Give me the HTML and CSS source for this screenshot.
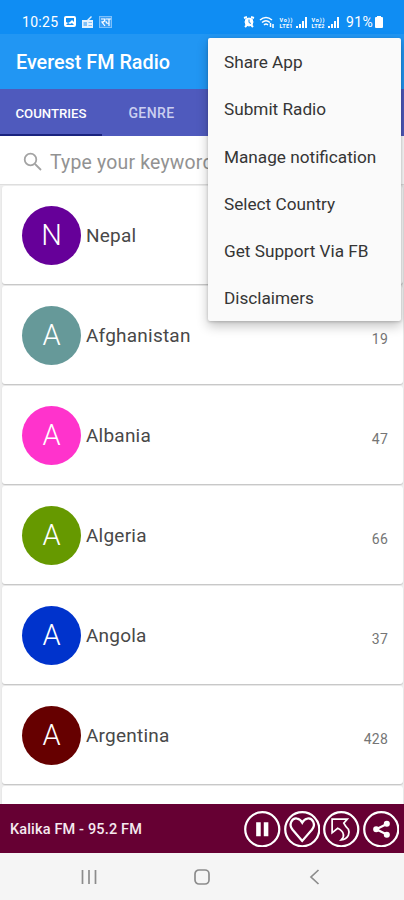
FILE: index.html
```html
<!DOCTYPE html>
<html lang="en">
<head>
<meta charset="utf-8">
<title>Everest FM Radio</title>
<link rel="stylesheet" href="styles.css">
</head>
<body>
<div class="screen">
  <header class="status">
    <span class="clock">10:25</span>
    <svg class="left-icons" width="50" height="14" viewBox="0 0 50 14">
      <path fill="#fff" fill-rule="evenodd" d="M2 1h8q2 0 2 2v7q0 2-2 2H2q-2 0-2-2V3q0-2 2-2zm0 2v4l2 1 2-1 2-2 2 2V3zm0 7h8L8 8l-2 1-2-1z"/>
      <path fill="#e4f1fd" d="M18 5h5l4-4 1 1-3 3h4v8H18z"/>
      <path fill="#7fc0f8" d="M19.500 7h3.500v4h-3.500zM24.500 7H28v1h-3.500zM24.500 10H28v1h-3.500z"/>
      <rect x="35.500" y="1.500" width="12" height="11" fill="#3c9ff6" stroke="#7dc0fa"/>
      <path fill="none" stroke="#fff" stroke-width="1.200" d="M37 4h4q0 3-3 3l3 4M42 4h5M45 4v7M42 6q0 3 3 2"/>
    </svg>
    <svg class="right-icons" width="100" height="14" viewBox="0 0 100 14">
      <g fill="none" stroke="#fff">
        <circle cx="6" cy="7" r="4" fill="#fff"/>
        <path stroke-width="2" d="M1 3l3-1M11 3L8 2M2 12l2-2M10 12l-2-2"/>
        <path stroke="#128ff4" d="M6 4.500v3l2 1"/>
        <path stroke-width="1.500" d="M17 5q6-5 12 0M19 7.500q4-3.500 8 0M21 10q2-2 4 0"/>
        <path stroke-width="1.500" d="M27.500 12V8M30 9v4"/>
      </g>
      <g class="volte">
        <text x="36.500" y="6.500" textLength="13">Vo))</text><text x="36.500" y="13" textLength="13">LTE1</text>
        <text x="68.500" y="6.500" textLength="13">Vo))</text><text x="68.500" y="13" textLength="13">LTE2</text>
      </g>
      <path fill="#fff" d="M53 11h2v2h-2zm3-2h2v4h-2zm3-3h2v7h-2zm3-4h2v11h-2zM85 11h2v2h-2zm3-2h2v4h-2zm3-3h2v7h-2zm3-4h2v11h-2z"/>
    </svg>
    <span class="percent">91%</span>
    <svg class="battery" width="8" height="12" viewBox="0 0 8 12"><path fill="#fff" d="M2 0h4v1h1q1 0 1 1v9q0 1-1 1H1q-1 0-1-1V2q0-1 1-1h1z"/></svg>
  </header>
  <div class="appbar">Everest FM Radio</div>
  <nav class="tabs">
    <span class="tab active"><span>COUNTRIES</span></span>
    <span class="tab"><span>GENRE</span></span>
  </nav>
  <div class="search">
    <svg width="20" height="20" viewBox="0 0 20 20" fill="none" stroke="#a3a3a3" stroke-width="1.800"><circle cx="7.500" cy="7.500" r="5.800"/><path d="M12 12l6 6"/></svg>
    <span>Type your keyword</span>
  </div>
  <main class="list">
    <div class="card"><span class="avatar purple">N</span><span class="name">Nepal</span></div>
    <div class="card"><span class="avatar teal">A</span><span class="name">Afghanistan</span><span class="count">19</span></div>
    <div class="card"><span class="avatar pink">A</span><span class="name">Albania</span><span class="count">47</span></div>
    <div class="card"><span class="avatar green">A</span><span class="name">Algeria</span><span class="count">66</span></div>
    <div class="card"><span class="avatar blue">A</span><span class="name">Angola</span><span class="count">37</span></div>
    <div class="card"><span class="avatar maroon">A</span><span class="name">Argentina</span><span class="count">428</span></div>
    <div class="card"></div>
  </main>
  <footer class="player">
    <span class="station">Kalika FM - 95.2 FM</span>
    <div class="controls">
      <svg viewBox="0 0 36 36"><circle cx="18" cy="18" r="16.800"/><path class="solid" d="M12 11h4.500v14H12zm7.500 0H24v14h-4.500z"/></svg>
      <svg viewBox="0 0 36 36"><circle cx="18" cy="18" r="16.800"/><path d="M18 29.500L8.500 18.500C4 13 8 6.500 13 7.500q3 .5 5 4 2-3.500 5-4c5-1 9 5.500 4.500 11z"/></svg>
      <svg viewBox="0 0 36 36"><circle cx="18" cy="18" r="16.800"/><path class="thin" d="M9 8h15l-3.500 4Q22 15 25 18q1.500 3 0 6-2 4-7 4.500 3-3 2-6-1-3.500-5.500-5.500L9 21.500z"/></svg>
      <svg viewBox="0 0 36 36"><circle cx="18" cy="18" r="16.800"/><path d="M24 12.500L13 18l11 5.500"/><path class="solid" d="M20.500 12.500a3 3 0 106 0 3 3 0 10-6 0M10 18a3 3 0 106 0 3 3 0 10-6 0M20.500 23.500a3 3 0 106 0 3 3 0 10-6 0"/></svg>
    </div>
  </footer>
  <div class="sysnav">
    <svg width="16" height="16" viewBox="0 0 16 16"><path d="M1.500 1v14M8 1v14M14.500 1v14"/></svg>
    <svg width="16" height="16" viewBox="0 0 16 16"><rect x="1" y="1" width="14" height="14" rx="4"/></svg>
    <svg width="16" height="16" viewBox="0 0 16 16"><path d="M11.500 1L4 8l7.500 7"/></svg>
  </div>
  <div class="menu">
    <span>Share App</span>
    <span>Submit Radio</span>
    <span>Manage notification</span>
    <span>Select Country</span>
    <span>Get Support Via FB</span>
    <span>Disclaimers</span>
  </div>
</div>
</body>
</html>
```
FILE: styles.css
```css
* { box-sizing: border-box; }
body { margin: 0; font-family: Roboto, "Liberation Sans", sans-serif; }
svg { display: block; flex: none; }
.screen { position: relative; width: 404px; height: 900px; overflow: hidden; display: flex; flex-direction: column; background: #fff; white-space: nowrap; }
.status { height: 34px; flex: none; background: #0f8df3; display: flex; align-items: center; padding: 9px 20px 0 22px; color: #fff; font-size: 14px; line-height: 16px; }
.clock { width: 42px; letter-spacing: .3px; }
.right-icons { margin-left: 129px; }
.volte { fill: #fff; font: bold 5.5px Roboto, sans-serif; }
.percent { width: 29px; margin-left: 3px; font-size: 14px; letter-spacing: .4px; }
.appbar { height: 55px; flex: none; background: #2196f3; color: #fff; font-size: 19.8px; font-weight: 500; line-height: 57px; padding-left: 16px; }
.tabs { height: 47px; flex: none; background: #4f5abd; display: flex; font-size: 14px; font-weight: 500; color: #cbcff0; }
.tab { width: 102px; display: flex; align-items: center; justify-content: center; padding: 3px 0 0 0; border-bottom: 2px solid transparent; }
.tab + .tab { padding-right: 3px; letter-spacing: .4px; }
.tab.active { color: #fff; border-color: #1a237e; font-size: 13.2px; }
.search { height: 48px; flex: none; display: flex; align-items: center; gap: 7px; padding: 4px 0 0 23px; font-size: 19.4px; letter-spacing: .2px; color: #929292; }
.list { flex: 1; min-height: 0; overflow: hidden; background: #ededed; padding: 1px 1px 0 2px; display: flex; flex-direction: column; gap: 2px; border-top: 1px solid #dedede; }
.card { height: 98px; flex: none; background: #fff; border-radius: 3px; display: flex; align-items: center; padding: 0 15px 0 20px; box-shadow: 0 1px 1px #c4c4c4; }
.avatar { width: 59px; height: 59px; border-radius: 50%; display: flex; align-items: center; justify-content: center; color: #fff; font-size: 29px; font-weight: 300; }
.purple { background: #660099; }
.teal { background: #669999; }
.pink { background: #ff33cc; }
.green { background: #669900; }
.blue { background: #0033cc; }
.maroon { background: #660000; }
.name { margin-left: 5px; font-size: 19px; color: #484848; padding-top: 1px; letter-spacing: .22px; }
.count { margin-left: auto; font-size: 14px; color: #757575; padding-top: 8px; letter-spacing: .2px; }
.player { height: 49px; flex: none; background: #660033; display: flex; align-items: center; justify-content: space-between; padding: 0 5px 0 10px; color: #f5e9ef; }
.station { font-size: 14.5px; font-weight: 500; letter-spacing: .15px; padding-top: 2px; }
.controls { display: flex; gap: 3px; padding-top: 1px; }
.controls svg { width: 36.5px; height: 36.5px; fill: none; stroke: #fff; stroke-width: 2.2; }
.controls .solid { fill: #fff; stroke: none; }
.controls .thin { stroke-width: 1.7; }
.sysnav { height: 47px; flex: none; background: #f5f5f5; display: flex; justify-content: space-between; align-items: center; padding: 1px 81px 0 81px; }
.sysnav svg { fill: none; stroke: #8c8c8c; stroke-width: 1.7; }
.menu { position: absolute; left: 208px; top: 38px; width: 193px; height: 283px; background: #fafafa; border-radius: 2px; display: flex; flex-direction: column; padding: 1px 0 0 16px; box-shadow: 0 5px 12px rgba(0,0,0,.24), 0 1px 3px rgba(0,0,0,.18); color: #353535; font-size: 17.2px; }
.menu span { height: 47.3px; line-height: 47.3px; }
```
